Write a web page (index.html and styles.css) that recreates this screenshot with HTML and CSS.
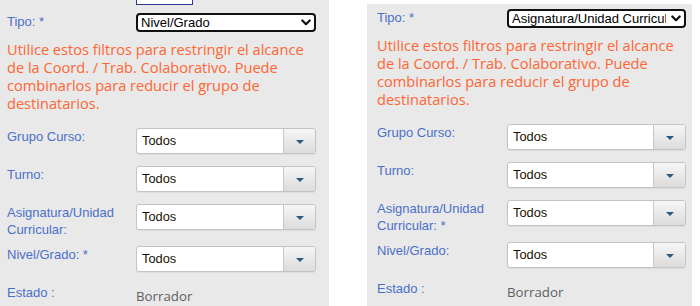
FILE: index.html
```html
<!DOCTYPE html>
<html lang="es">
<head>
<meta charset="utf-8">
<title>Filtros</title>
<link rel="stylesheet" href="styles.css">
</head>
<body>
<div class="page">
  <section class="panel panel-left">
    <div class="top-box"></div>
    <div class="row row-tipo">
      <label class="lbl">Tipo: *</label>
      <div class="sel-wrap">
        <select class="native-select"><option>Nivel/Grado</option></select>
        <svg class="chev" width="10" height="7" viewBox="0 0 10 7"><path d="M1.3 1.5 L5 5.2 L8.7 1.5" fill="none" stroke="#111" stroke-width="2.2" stroke-linecap="round" stroke-linejoin="round"/></svg>
      </div>
    </div>
    <p class="hint">Utilice estos filtros para restringir el alcance de la Coord. / Trab. Colaborativo. Puede combinarlos para reducir el grupo de destinatarios.</p>
    <div class="row"><label class="lbl">Grupo Curso:</label><div class="ctl"><div class="kdd"><span class="kdd-text">Todos</span><span class="kdd-btn"><span class="tri"></span></span></div></div></div>
    <div class="row"><label class="lbl">Turno:</label><div class="ctl"><div class="kdd"><span class="kdd-text">Todos</span><span class="kdd-btn"><span class="tri"></span></span></div></div></div>
    <div class="row"><label class="lbl">Asignatura/Unidad Curricular:</label><div class="ctl"><div class="kdd"><span class="kdd-text">Todos</span><span class="kdd-btn"><span class="tri"></span></span></div></div></div>
    <div class="row"><label class="lbl">Nivel/Grado: *</label><div class="ctl"><div class="kdd"><span class="kdd-text">Todos</span><span class="kdd-btn"><span class="tri"></span></span></div></div></div>
    <div class="row"><label class="lbl">Estado :</label><span class="value">Borrador</span></div>
  </section>

  <section class="panel panel-right">
    <div class="row row-tipo">
      <label class="lbl">Tipo: *</label>
      <div class="sel-wrap">
        <select class="native-select"><option>Asignatura/Unidad Curricular</option></select>
        <svg class="chev" width="10" height="7" viewBox="0 0 10 7"><path d="M1.3 1.5 L5 5.2 L8.7 1.5" fill="none" stroke="#111" stroke-width="2.2" stroke-linecap="round" stroke-linejoin="round"/></svg>
      </div>
    </div>
    <p class="hint">Utilice estos filtros para restringir el alcance de la Coord. / Trab. Colaborativo. Puede combinarlos para reducir el grupo de destinatarios.</p>
    <div class="row"><label class="lbl">Grupo Curso:</label><div class="ctl"><div class="kdd"><span class="kdd-text">Todos</span><span class="kdd-btn"><span class="tri"></span></span></div></div></div>
    <div class="row"><label class="lbl">Turno:</label><div class="ctl"><div class="kdd"><span class="kdd-text">Todos</span><span class="kdd-btn"><span class="tri"></span></span></div></div></div>
    <div class="row"><label class="lbl">Asignatura/Unidad Curricular: *</label><div class="ctl"><div class="kdd"><span class="kdd-text">Todos</span><span class="kdd-btn"><span class="tri"></span></span></div></div></div>
    <div class="row"><label class="lbl">Nivel/Grado:</label><div class="ctl"><div class="kdd"><span class="kdd-text">Todos</span><span class="kdd-btn"><span class="tri"></span></span></div></div></div>
    <div class="row"><label class="lbl">Estado :</label><span class="value">Borrador</span></div>
  </section>
</div>
</body>
</html>
```
FILE: styles.css
```css
html, body {
  margin: 0;
  padding: 0;
  background: #ffffff;
  height: 306px;
  overflow: hidden;
}
.page {
  display: flex;
  align-items: flex-start;
  gap: 38px;
  font-family: "Liberation Sans", Arial, sans-serif;
}
.panel {
  background: #e9e9e9;
  box-sizing: border-box;
  overflow: hidden;
}
.panel-left {
  width: 329px;
  height: 306px;
  padding: 0 13px 0 7px;
}
.panel-right {
  width: 325px;
  height: 302px;
  margin-top: 4px;
  padding: 5px 6px 0 10px;
}
.panel-right .lbl { width: 130px; }

.top-box {
  margin-left: 129px;
  width: 57px;
  height: 5px;
  box-sizing: border-box;
  border: 1px solid #2b3a8c;
  border-top: none;
  background: #ffffff;
  margin-bottom: 8px;
}

.row {
  display: flex;
  align-items: flex-start;
  margin-bottom: 8px;
}
.lbl {
  width: 129px;
  flex: none;
  box-sizing: border-box;
  padding-right: 6px;
  font-size: 13px;
  line-height: 17px;
  color: #4b70c9;
}
.ctl {
  flex: 1;
  padding-bottom: 4px;
}

.sel-wrap {
  flex: 1;
  min-width: 0;
  position: relative;
  height: 19px;
}
.native-select {
  -webkit-appearance: none;
  appearance: none;
  display: block;
  width: 100%;
  height: 19px;
  box-sizing: border-box;
  margin: 0;
  border: 2px solid #111111;
  border-radius: 4px;
  background: #ffffff;
  padding: 0 18px 0 3px;
  font-family: "Liberation Sans", Arial, sans-serif;
  font-size: 13px;
  line-height: 15px;
  color: #000000;
  outline: none;
}
.chev {
  position: absolute;
  right: 5px;
  top: 6px;
  pointer-events: none;
}

.hint {
  margin: 0 0 16px 0;
  font-family: "Open Sans", "Noto Sans", sans-serif;
  font-size: 14.6px;
  line-height: 18px;
  color: #ff6633;
}

.kdd {
  display: flex;
  height: 26px;
  box-sizing: border-box;
  border: 1px solid #c3c3c3;
  border-radius: 3px;
  background: #ffffff;
  box-shadow: 0 1px 1px rgba(0,0,0,0.06);
  overflow: hidden;
}
.kdd-text {
  flex: 1;
  padding-left: 5px;
  font-size: 12.8px;
  line-height: 24px;
  color: #1a1200;
}
.kdd-btn {
  width: 31px;
  flex: none;
  border-left: 1px solid #c8c8c8;
  background: linear-gradient(#f6f6f6, #dcdcdc);
  display: flex;
  align-items: center;
  justify-content: center;
}
.tri {
  width: 0;
  height: 0;
  border-left: 4px solid transparent;
  border-right: 4px solid transparent;
  border-top: 4px solid #2d5a7a;
  margin-top: 1px;
}

.value {
  padding-top: 3px;
  font-family: "Open Sans", "Noto Sans", sans-serif;
  font-size: 13.3px;
  line-height: 18px;
  color: #5f5f5f;
}
```
